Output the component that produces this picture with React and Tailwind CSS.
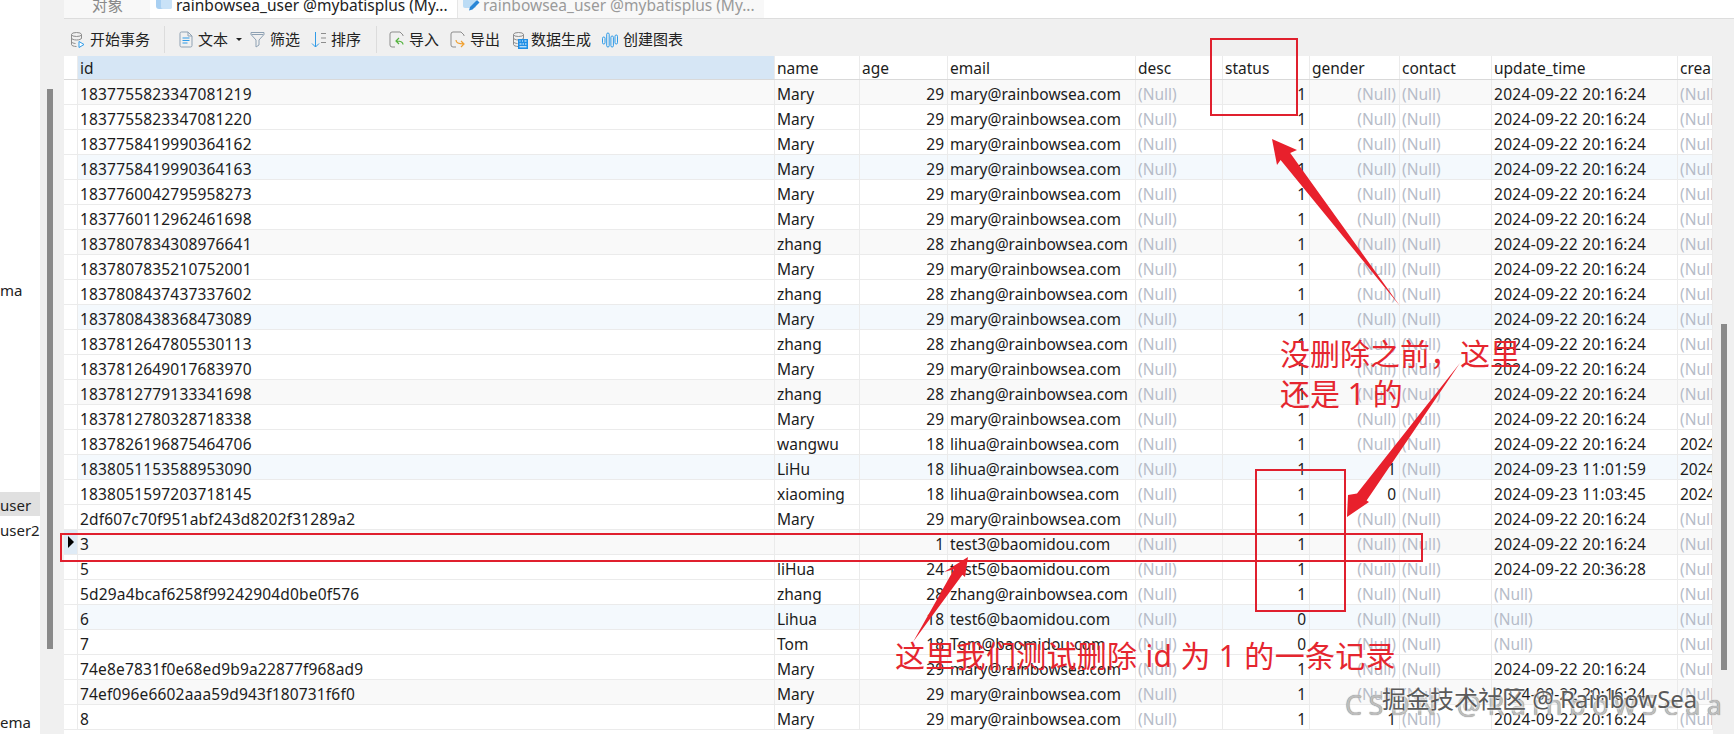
import React from 'react';

const cols = 'grid grid-cols-[14px_697px_85px_88px_188px_87px_87px_90px_92px_186px_35px]';

const D1 = '2024-09-22 20:16:24';
const M = ['Mary', 29, 'mary@rainbowsea.com'];
const Z = ['zhang', 28, 'zhang@rainbowsea.com'];

// id, name, age, email, status, gender, update_time, create_time
const rows = [
    ['1837755823347081219', ...M, 1, null, D1, null],
    ['1837755823347081220', ...M, 1, null, D1, null],
    ['1837758419990364162', ...M, 1, null, D1, null],
    ['1837758419990364163', ...M, 1, null, D1, null],
    ['1837760042795958273', ...M, 1, null, D1, null],
    ['1837760112962461698', ...M, 1, null, D1, null],
    ['1837807834308976641', ...Z, 1, null, D1, null],
    ['1837807835210752001', ...M, 1, null, D1, null],
    ['1837808437437337602', ...Z, 1, null, D1, null],
    ['1837808438368473089', ...M, 1, null, D1, null],
    ['1837812647805530113', ...Z, 1, null, D1, null],
    ['1837812649017683970', ...M, 1, null, D1, null],
    ['1837812779133341698', ...Z, 1, null, D1, null],
    ['1837812780328718338', ...M, 1, null, D1, null],
    ['1837826196875464706', 'wangwu', 18, 'lihua@rainbowsea.com', 1, null, D1, '2024'],
    ['1838051153588953090', 'LiHu', 18, 'lihua@rainbowsea.com', 1, 1, '2024-09-23 11:01:59', '2024'],
    ['1838051597203718145', 'xiaoming', 18, 'lihua@rainbowsea.com', 1, 0, '2024-09-23 11:03:45', '2024'],
    ['2df607c70f951abf243d8202f31289a2', ...M, 1, null, D1, null],
    ['3', '', 1, 'test3@baomidou.com', 1, null, D1, null],
    ['5', 'liHua', 24, 'test5@baomidou.com', 1, null, '2024-09-22 20:36:28', null],
    ['5d29a4bcaf6258f99242904d0be0f576', ...Z, 1, null, null, null],
    ['6', 'Lihua', 18, 'test6@baomidou.com', 0, null, null, null],
    ['7', 'Tom', 18, 'Tom@baomidou.com', 0, null, null, null],
    ['74e8e7831f0e68ed9b9a22877f968ad9', ...M, 1, null, D1, null],
    ['74ef096e6602aaa59d943f180731f6f0', ...M, 1, null, D1, null],
    ['8', ...M, 1, 1, D1, null],
];

const headers = ['id', 'name', 'age', 'email', 'desc', 'status', 'gender', 'contact', 'update_time', 'crea'];

const Cell = ({ value, right, bg = '', track = '' }) => {
    const isNull = value === null;
    return (
        <div className={`h-[25px] flex items-center overflow-hidden whitespace-nowrap border-r border-b border-[#ebebeb] pt-[5px] ${right ? 'justify-end pr-[3px]' : 'pl-[2px]'} ${isNull ? 'text-[#b6bcc8]' : `text-[#1c1c1c] ${track}`} ${bg}`}>
            {isNull ? '(Null)' : value}
        </div>
    );
};

const DbIcon = ({ children }) => (
    <svg width="16" height="18" viewBox="0 0 16 18" fill="none">
        <ellipse cx="6.5" cy="3.5" rx="5" ry="2" stroke="#8d8d8d" />
        <path d="M1.5 3.5v10c0 1.1 2.2 2 5 2M11.5 3.5v4M1.5 7c0 1.1 2.2 2 5 2s5-.9 5-2M1.5 10.5c0 1.1 2.2 2 4 2" stroke="#8d8d8d" />
        {children}
    </svg>
);

const Tool = ({ icon, label, gap = 'mr-[5px]', className = '' }) => (
    <div className={`flex items-center ${className}`}>
        <div className={`flex items-center ${gap}`}>{icon}</div>
        <span className="text-[15px] text-[#222]">{label}</span>
    </div>
);

const Sep = ({ className }) => <div className={`h-[27px] w-px bg-[#dcdcdc] ${className}`} />;

const Toolbar = () => (
    <div className="h-[37px] flex items-center bg-[#f0f0f0] pl-[6px] pt-[4px]">
        <Tool
            label="开始事务"
            icon={<DbIcon><path d="M9 10.5v6l5-3z" fill="#fff" stroke="#2f9be8" /></DbIcon>}
            gap="mr-[4px]"
        />
        <Sep className="ml-[14px]" />
        <Tool
            className="ml-[14px]"
            label="文本"
            gap="mr-[5px]"
            icon={
                <svg width="14" height="17" viewBox="0 0 14 17" fill="none">
                    <path d="M1 2.5A1.5 1.5 0 0 1 2.5 1H9l4 4v9.500a1.500 1.500 0 0 1-1.500 1.500h-9A1.500 1.500 0 0 1 1 14.500z" stroke="#8ea1b3" />
                    <path d="M9 1v4h4" stroke="#8ea1b3" />
                    <path d="M3.500 7h7M3.500 9.500h7M3.500 12h5" stroke="#2f9be8" />
                </svg>
            }
        />
        <div className="ml-[8px] w-0 h-0 border-l-[3px] border-r-[3px] border-t-[3px] border-l-transparent border-r-transparent border-t-[#222]" />
        <Tool
            className="ml-[8px]"
            label="筛选"
            icon={
                <svg width="15" height="17" viewBox="0 0 15 17" fill="none">
                    <path d="M1 1.500h13v2L9 9v5l-3 2V9L1 3.500z" stroke="#8ea1b3" />
                    <path d="M1.500 3.500h12" stroke="#8ea1b3" />
                </svg>
            }
        />
        <Tool
            className="ml-[11px]"
            label="排序"
            icon={
                <svg width="15" height="18" viewBox="0 0 15 18" fill="none">
                    <path d="M4.500 1v15M1 12.500 4.500 16 8 12.500" stroke="#2f9be8" />
                    <path d="M10 2.500h5M10 7h5M10 11.500h5" stroke="#8d8d8d" />
                </svg>
            }
        />
        <Sep className="ml-[15px]" />
        <Tool
            className="ml-[12px]"
            label="导入"
            icon={
                <svg width="15" height="17" viewBox="0 0 15 17" fill="none">
                    <path d="M11 1H3a2 2 0 0 0-2 2v11a2 2 0 0 0 2 2h3M11 1l3 3v1" stroke="#8d8d8d" />
                    <path d="M14 13.500c0-2.500-2-3.500-6.500-3.500M10 7 7 10l3 3" stroke="#54b33e" strokeWidth="1.200" />
                </svg>
            }
        />
        <Tool
            className="ml-[11px]"
            label="导出"
            gap="mr-[5px]"
            icon={
                <svg width="15" height="17" viewBox="0 0 15 17" fill="none">
                    <path d="M11 1H3a2 2 0 0 0-2 2v11a2 2 0 0 0 2 2h3M11 1l3 3v1" stroke="#8d8d8d" />
                    <path d="M6 9c0 3 2 4 8 4M11 10l3 3-3 3" stroke="#f0a030" strokeWidth="1.200" />
                </svg>
            }
        />
        <Tool
            className="ml-[12px]"
            label="数据生成"
            gap="mr-[3px]"
            icon={
                <DbIcon>
                    <rect x="6" y="8" width="10" height="10" fill="#1f8fe6" />
                    <path d="M7.500 10h1M10 10h1M12.500 10h2M7.500 13h2M10.500 13h1.500M13 13h1.500M7.500 15.800h7" stroke="#fff" strokeWidth="1" />
                </DbIcon>
            }
        />
        <Tool
            className="ml-[11px]"
            label="创建图表"
            icon={
                <svg width="16" height="16" viewBox="0 0 16 16" fill="none" stroke="#2f9be8" strokeWidth="1">
                    <rect x="0.500" y="5" width="2.500" height="7" rx="1.250" />
                    <rect x="4.700" y="1" width="2.500" height="14" rx="1.250" />
                    <rect x="8.900" y="4" width="2.500" height="11" rx="1.250" />
                    <rect x="13" y="3" width="2.500" height="9" rx="1.250" />
                </svg>
            }
        />
    </div>
);

const Tabs = () => (
    <div className="h-[19px] flex bg-white border-b border-[#dddddd] text-[15.500px] leading-[10px] whitespace-nowrap overflow-hidden">
        <div className="w-[86px] h-full bg-[#f8f8f8] pl-[28px] text-[#8a8a8a]">对象</div>
        <div className="w-[308px] h-full bg-white border-r border-[#e6e6e6] flex items-start pl-[5px] text-[#222]">
            <svg width="18" height="10" viewBox="0 0 18 10" className="mr-[3px]">
                <rect x="1" y="-6" width="16" height="15" rx="3" fill="#a9d0f2" />
                <rect x="6" y="-6" width="11" height="15" rx="2" fill="#c9e2f7" />
            </svg>
            rainbowsea_user @mybatisplus (My...
        </div>
        <div className="w-[306px] h-full bg-[#f8f8f8] flex items-start pl-[4px] text-[#9a9a9a]">
            <svg width="18" height="11" viewBox="0 0 18 11" className="mr-[3px]">
                <rect x="1" y="-6" width="13" height="14" rx="2" fill="#bcdcf5" />
                <path d="M7 10.500 8 7l7-7 2.500 2.500-7 7z" fill="#2a86d6" />
            </svg>
            rainbowsea_user @mybatisplus (My...
        </div>
    </div>
);

const DataGrid = () => (
    <div className="w-[1649px] bg-white text-[15.500px]">
        <div className={`${cols} h-[24px] border-b border-[#d9d9d9]`}>
            <div className="bg-white border-r border-[#ebebeb]" />
            {headers.map((h, i) => (
                <div key={h} className={`flex items-center pl-[2px] pt-[3px] overflow-hidden border-r border-[#ebebeb] text-[#1c1c1c] ${i === 0 ? 'bg-[#d6e6f5]' : 'bg-white'}`}>
                    {h}
                </div>
            ))}
        </div>
        {rows.map((r, k) => {
            const stripe = k % 6 === 0 ? 'bg-[#f9f9f9]' : k % 6 === 3 ? 'bg-[#f4f9fd]' : 'bg-white';
            return (
                <div key={k} className={cols}>
                    <div className={`h-[25px] flex items-center justify-center border-r border-b border-[#ebebeb] ${k === 18 ? 'bg-[#dfebf6]' : 'bg-white'}`}>
                        {k === 18 && <div className="w-0 h-0 border-t-[6px] border-b-[6px] border-l-[6px] border-t-transparent border-b-transparent border-l-black" />}
                    </div>
                    <Cell value={r[0]} bg={stripe} track="tracking-[0.17px]" />
                    <Cell value={r[1]} bg={stripe} />
                    <Cell value={r[2]} bg={stripe} right />
                    <Cell value={r[3]} bg={stripe} />
                    <Cell value={null} bg={stripe} />
                    <Cell value={r[4]} bg={stripe} right />
                    <Cell value={r[5]} bg={stripe} right />
                    <Cell value={null} bg={stripe} />
                    <Cell value={r[6]} bg={stripe} track="tracking-[0.3px]" />
                    <Cell value={r[7]} bg={stripe} />
                </div>
            );
        })}
    </div>
);

const Annotations = () => (
    <>
        <div className="absolute left-[1210px] top-[38px] w-[88px] h-[78px] border-2 border-[#e0202e]" />
        <div className="absolute left-[1255px] top-[469px] w-[91px] h-[143px] border-2 border-[#e0202e]" />
        <div className="absolute left-[60px] top-[533px] w-[1363px] h-[29px] border-2 border-[#e0202e]" />
        <svg className="absolute left-0 top-0" width="1734" height="734" fill="#e8202c">
            <polygon points="1272,139 1297,150 1290.200,153 1400,306 1280.600,160 1277,165" />
            <polygon points="1347,517 1348,495 1357,493.500 1460,363 1366.600,500.500 1369,502" />
            <polygon points="968,557 944,572 954,569.300 913,642 962.400,574.700 965,577" />
        </svg>
        <div className="absolute left-[1280px] top-[334px] w-[250px] text-[30px] leading-[40px] text-[#e5262f]">
            <div className="whitespace-nowrap">没删除之前，这里</div>
            <div className="whitespace-nowrap">还是 1 的</div>
        </div>
        <div className="absolute left-[895px] top-[636px] text-[30px] leading-[40px] tracking-[0.3px] text-[#e5262f] whitespace-nowrap">
            这里我们测试删除 id 为 1 的一条记录
        </div>
        <div className="absolute left-[1345px] top-[686px] text-[27px] leading-[38px] tracking-[6.500px] text-[#bdbdbd] whitespace-nowrap [text-shadow:0_0_1px_#666,0_0_2px_#fff]">
            CSDN @RainbowSeaa
        </div>
        <div className="absolute left-[1382px] top-[682px] text-[24px] leading-[34px] text-[#5a5a5a] whitespace-nowrap [text-shadow:0_0_2px_#fff,0_0_3px_#fff]">
            掘金技术社区 @ RainbowSea
        </div>
    </>
);

const App = () => (
    <div className="relative w-[1734px] h-[734px] overflow-hidden flex bg-white [font-family:'Noto_Sans','Noto_Sans_CJK_SC',sans-serif]">
        <div className="w-[40px] h-full shrink-0 bg-white text-[15px] text-[#222] whitespace-nowrap overflow-hidden pt-[277px]">
            <div className="h-[24px] flex items-center pt-[3px]">ma</div>
            <div className="h-[24px] mt-[191px] flex items-center pt-[3px] bg-[#e0e0e0]">user</div>
            <div className="h-[24px] mt-[1px] flex items-center pt-[3px]">user2</div>
            <div className="h-[24px] mt-[168px] flex items-center pt-[3px]">ema</div>
        </div>
        <div className="w-[24px] h-full shrink-0 bg-[#f0f0f0] pt-[89px] pl-[7px]">
            <div className="w-[6px] h-[560px] bg-[#8a8a8a]" />
        </div>
        <div className="flex-1 flex flex-col min-w-0">
            <Tabs />
            <Toolbar />
            <div className="flex-1 flex min-h-0 overflow-hidden">
                <DataGrid />
                <div className="flex-1 bg-[#f0f0f0] pt-[268px] pl-[8px]">
                    <div className="w-[6px] h-[346px] bg-[#8a8a8a]" />
                </div>
            </div>
        </div>
        <Annotations />
    </div>
);

export default App;
